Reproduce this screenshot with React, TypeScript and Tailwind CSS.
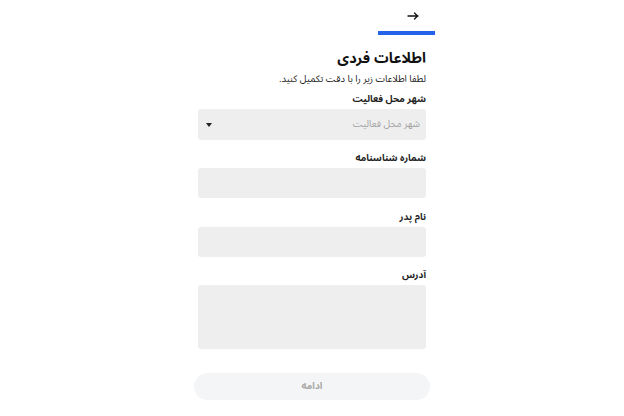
import React from "react";

const font = {
  fontFamily:
    '"Noto Sans Arabic SemiCondensed", "Noto Sans Arabic Condensed", "Noto Sans Arabic", "DejaVu Sans", sans-serif',
};

function Label({ children }: { children: React.ReactNode }) {
  return <div className="text-[9.5px] font-bold text-[#1f1f1f] leading-[16px]">{children}</div>;
}

export default function App() {
  return (
    <div dir="rtl" style={font} className="w-[624px] h-[416px] bg-white flex flex-col items-center overflow-hidden">
      <div className="w-[246px] flex flex-col">
        <div className="flex h-[35px]">
          <div className="w-[57px] flex flex-col">
            <div className="h-[31px] flex items-center justify-center pl-[13px]">
              <svg width="12" height="8" viewBox="0 0 12 8" fill="none" stroke="#111" strokeWidth="1.3" strokeLinecap="round" strokeLinejoin="round">
                <path d="M1 4h10M7.5 1l3 3-3 3" />
              </svg>
            </div>
            <div className="w-full h-[4px] bg-[#2563eb]" />
          </div>
        </div>
      </div>
      <div className="w-[228px] flex flex-col">
        <div className="mt-[14px] text-[14.5px] font-bold text-[#111] leading-[20px]">اطلاعات فردی</div>
        <div className="mt-[2px] text-[9.5px] text-[#222] leading-[16px]">لطفا اطلاعات زیر را با دقت تکمیل کنید.</div>
        <div className="mt-[4px]"><Label>شهر محل فعالیت</Label></div>
        <div className="mt-[2px] h-[31px] rounded-[3px] bg-[#eeeeee] flex items-center justify-between pr-[6px] pl-[8px]">
          <span className="text-[9.5px] text-[#a3a3a3]">شهر محل فعالیت</span>
          <svg width="6" height="4" viewBox="0 0 6 4"><path d="M0 0h6L3 4z" fill="#222" /></svg>
        </div>
        <div className="mt-[10px]"><Label>شماره شناسنامه</Label></div>
        <div className="mt-[2px] h-[30px] rounded-[3px] bg-[#eeeeee]" />
        <div className="mt-[11px]"><Label>نام پدر</Label></div>
        <div className="mt-[2px] h-[30px] rounded-[3px] bg-[#eeeeee]" />
        <div className="mt-[10px]"><Label>آدرس</Label></div>
        <div className="mt-[2px] h-[64px] rounded-[3px] bg-[#eeeeee]" />
      </div>
      <div className="mt-[24px] w-[236px] h-[27px] rounded-full bg-[#f4f5f6] flex items-center justify-center text-[9.5px] font-bold text-[#a8a8a8]">
        ادامه
      </div>
    </div>
  );
}
